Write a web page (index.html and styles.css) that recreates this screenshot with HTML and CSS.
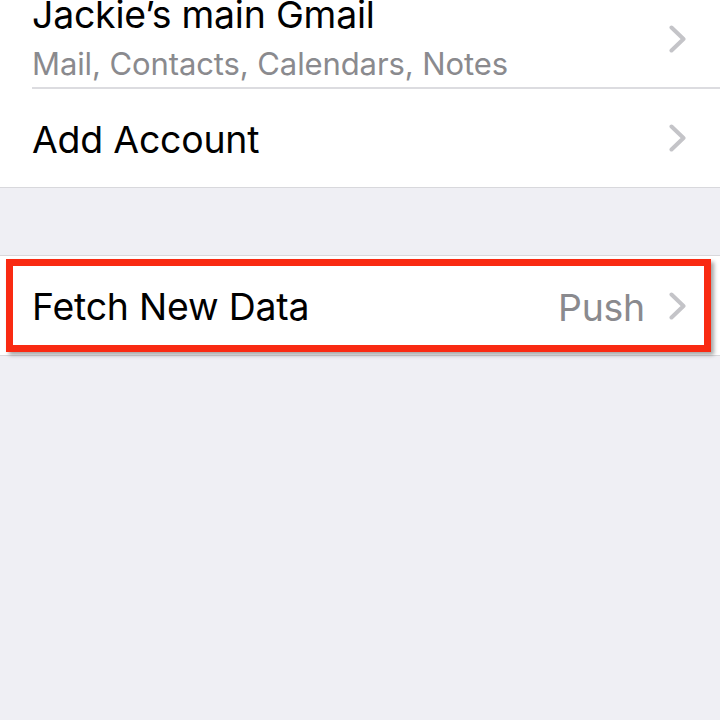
FILE: index.html
```html
<!DOCTYPE html>
<html>
<head>
<meta charset="utf-8">
<link rel="stylesheet" href="styles.css">
</head>
<body>
<div class="group group-top">
  <div class="row row-account">
    <div class="row-body sep">
      <div class="texts">
        <div class="title">Jackie’s main Gmail</div>
        <div class="subtitle">Mail, Contacts, Calendars, Notes</div>
      </div>
      <svg class="chev" width="17" height="28" viewBox="0 0 17 28"><polyline points="2.5,2.5 14.5,14 2.5,25.5" fill="none" stroke="#c4c4c8" stroke-width="4" stroke-linecap="round" stroke-linejoin="round"/></svg>
    </div>
  </div>
  <div class="row row-add">
    <div class="row-body">
      <div class="title">Add Account</div>
      <svg class="chev" width="17" height="28" viewBox="0 0 17 28"><polyline points="2.5,2.5 14.5,14 2.5,25.5" fill="none" stroke="#c4c4c8" stroke-width="4" stroke-linecap="round" stroke-linejoin="round"/></svg>
    </div>
  </div>
</div>
<div class="group group-fetch">
  <div class="row row-fetch">
    <div class="row-body">
      <div class="title">Fetch New Data</div>
      <div class="value">Push</div>
      <svg class="chev" width="17" height="28" viewBox="0 0 17 28"><polyline points="2.5,2.5 14.5,14 2.5,25.5" fill="none" stroke="#c4c4c8" stroke-width="4" stroke-linecap="round" stroke-linejoin="round"/></svg>
    </div>
  </div>
  <div class="highlight"></div>
</div>
</body>
</html>
```
FILE: styles.css
```css
html, body {
  margin: 0;
  padding: 0;
  background: #efeff4;
  font-family: Inter, "Liberation Sans", sans-serif;
  width: 720px;
  height: 720px;
  overflow: hidden;
}
.group {
  background: #ffffff;
  border-bottom: 1px solid #d8d8dc;
  position: relative;
}
.group-fetch {
  margin-top: 67px;
  border-top: 1px solid #d8d8dc;
}
.row {
  padding-left: 32px;
}
.row-body {
  display: flex;
  align-items: center;
  padding-right: 34px;
  box-sizing: border-box;
}
.sep {
  border-bottom: 2px solid #dcdce0;
}
.row-account .row-body {
  height: 89px;
  align-items: flex-start;
}
.row-account .chev {
  margin-top: 25px;
}
.row-add .row-body {
  height: 98px;
  padding-top: 4px;
}
.row-fetch .row-body {
  height: 99px;
  padding-top: 3px;
}
.texts {
  flex: 1;
  margin-top: -7px;
}
.title {
  flex: 1;
  font-size: 37.4px;
  line-height: 44px;
  color: #000;
  letter-spacing: -0.2px;
}
.subtitle {
  font-size: 31px;
  line-height: 36px;
  color: #8a8a8e;
  margin-top: 9px;
  letter-spacing: -0.1px;
}
.value {
  font-size: 37.4px;
  color: #8a8a8e;
  margin-right: 24px;
  letter-spacing: -0.2px;
}
.row-fetch .chev {
  margin-top: -3px;
}
.row-add .chev {
  margin-top: -4px;
}
.chev {
  flex: none;
}
.highlight {
  position: absolute;
  left: 6px;
  top: 3px;
  width: 705px;
  height: 93px;
  box-sizing: border-box;
  border: 7px solid #f92a12;
  box-shadow: 3px 3px 4px rgba(0,0,0,0.35);
}
```
